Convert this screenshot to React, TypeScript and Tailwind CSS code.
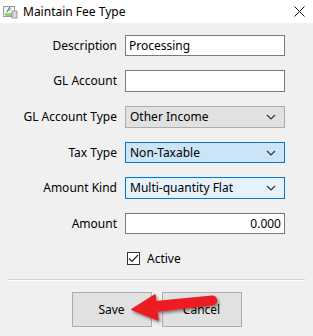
import React from "react";

const chevron = (
  <svg width="10" height="6" viewBox="0 0 10 6" className="shrink-0">
    <path d="M1 1l4 4 4-4" fill="none" stroke="#333" strokeWidth="1.2" />
  </svg>
);

function Row({ label, top, children }: { label: string; top: string; children: React.ReactNode }) {
  return (
    <div className={`flex items-center gap-[8px] ${top}`}>
      <div className="w-[117px] text-right leading-none">{label}</div>
      {children}
    </div>
  );
}

function TextBox({ value, right, h }: { value?: string; right?: boolean; h: string }) {
  return (
    <div
      className={`${h} w-[160px] bg-white border border-[#7a7a7a] px-[3px] flex items-center ${
        right ? "justify-end" : ""
      }`}
    >
      {value}
    </div>
  );
}

function Select({ value, variant, h }: { value: string; variant: "plain" | "focus" | "hover"; h: string }) {
  const cls =
    variant === "plain"
      ? "bg-[#e1e1e1] border-[#adadad]"
      : variant === "focus"
        ? "bg-[#cce4f7] border-[#0078d7]"
        : "bg-[#e5f1fb] border-[#0078d7]";
  return (
    <div className={`${h} w-[160px] border pl-[4px] pr-[8px] flex items-center justify-between ${cls}`}>
      <span>{value}</span>
      {chevron}
    </div>
  );
}

export default function App() {
  return (
    <div
      className="relative w-[313px] h-[336px] bg-[#f0f0f0] text-[12px] text-black overflow-hidden"
      style={{ fontFamily: '"Noto Sans", "Open Sans", sans-serif' }}
    >
      {/* title bar */}
      <div className="h-[23px] bg-white flex items-center pl-[3px] pr-[8px]">
        <svg width="15" height="14" viewBox="0 0 15 14" className="mr-[5px]">
          <rect x="0.5" y="1.5" width="11" height="10" fill="#f4f4f4" stroke="#9a9a9a" />
          <rect x="2" y="8" width="9" height="3" fill="#9ccc7a" />
          <path d="M4 7l3-5" stroke="#3b7bd4" strokeWidth="1.2" />
          <path d="M6 6l2-3" stroke="#e0a030" strokeWidth="1" />
          <rect x="9" y="6" width="5" height="7" fill="#d8d8d8" stroke="#8a8a8a" strokeWidth="0.8" />
        </svg>
        <span className="flex-1">Maintain Fee Type</span>
        <svg width="11" height="11" viewBox="0 0 11 11">
          <path d="M0.5 0.5l10 10M10.5 0.5l-10 10" stroke="#111" strokeWidth="1" />
        </svg>
      </div>

      {/* form */}
      <div className="flex flex-col">
        <Row label="Description" top="mt-[12px]">
          <TextBox value="Processing" h="h-[21px]" />
        </Row>
        <Row label="GL Account" top="mt-[14px]">
          <TextBox h="h-[22px]" />
        </Row>
        <Row label="GL Account Type" top="mt-[14px]">
          <Select value="Other Income" variant="plain" h="h-[22px]" />
        </Row>
        <Row label="Tax Type" top="mt-[14px]">
          <Select value="Non-Taxable" variant="focus" h="h-[21px]" />
        </Row>
        <Row label="Amount Kind" top="mt-[14px]">
          <Select value="Multi-quantity Flat" variant="hover" h="h-[22px]" />
        </Row>
        <Row label="Amount" top="mt-[14px]">
          <TextBox value="0.000" right h="h-[21px]" />
        </Row>
        <div className="flex items-center gap-[7px] pl-[127px] mt-[18px]">
          <div className="w-[13px] h-[13px] border border-[#333] bg-white flex items-center justify-center">
            <svg width="11" height="9" viewBox="0 0 11 9">
              <path d="M1 4.5l3 3 6-6.5" fill="none" stroke="#222" strokeWidth="1.2" />
            </svg>
          </div>
          <span className="leading-none">Active</span>
        </div>
      </div>

      {/* separator */}
      <div className="mx-[8px] mt-[14px] h-[2px] border-t border-[#d5d5d5] border-b border-b-white" />

      {/* buttons */}
      <div className="flex justify-center gap-[10px] mt-[11px]">
        <div className="w-[80px] h-[35px] bg-[#e1e1e1] border border-[#adadad] flex items-center justify-center">
          Save
        </div>
        <div className="w-[80px] h-[35px] bg-[#e1e1e1] border border-[#adadad] flex items-center justify-center">
          Cancel
        </div>
      </div>

      {/* red arrow annotation */}
      <svg
        className="absolute left-0 top-0 pointer-events-none"
        width="313"
        height="336"
        viewBox="0 0 313 336"
      >
        <defs>
          <filter id="sh" x="-20%" y="-50%" width="140%" height="200%">
            <feDropShadow dx="1.5" dy="2" stdDeviation="1.5" floodColor="#000" floodOpacity="0.45" />
          </filter>
        </defs>
        <g filter="url(#sh)" fill="#ec1c24">
          <path d="M150 301.5 L212 295.5 A5 5 0 0 1 212.5 305.5 L152 312.5 Z" />
          <path d="M132 309.5 L155 295 L158 320 Z" stroke="#ec1c24" strokeWidth="1.5" strokeLinejoin="round" />
        </g>
      </svg>
    </div>
  );
}
